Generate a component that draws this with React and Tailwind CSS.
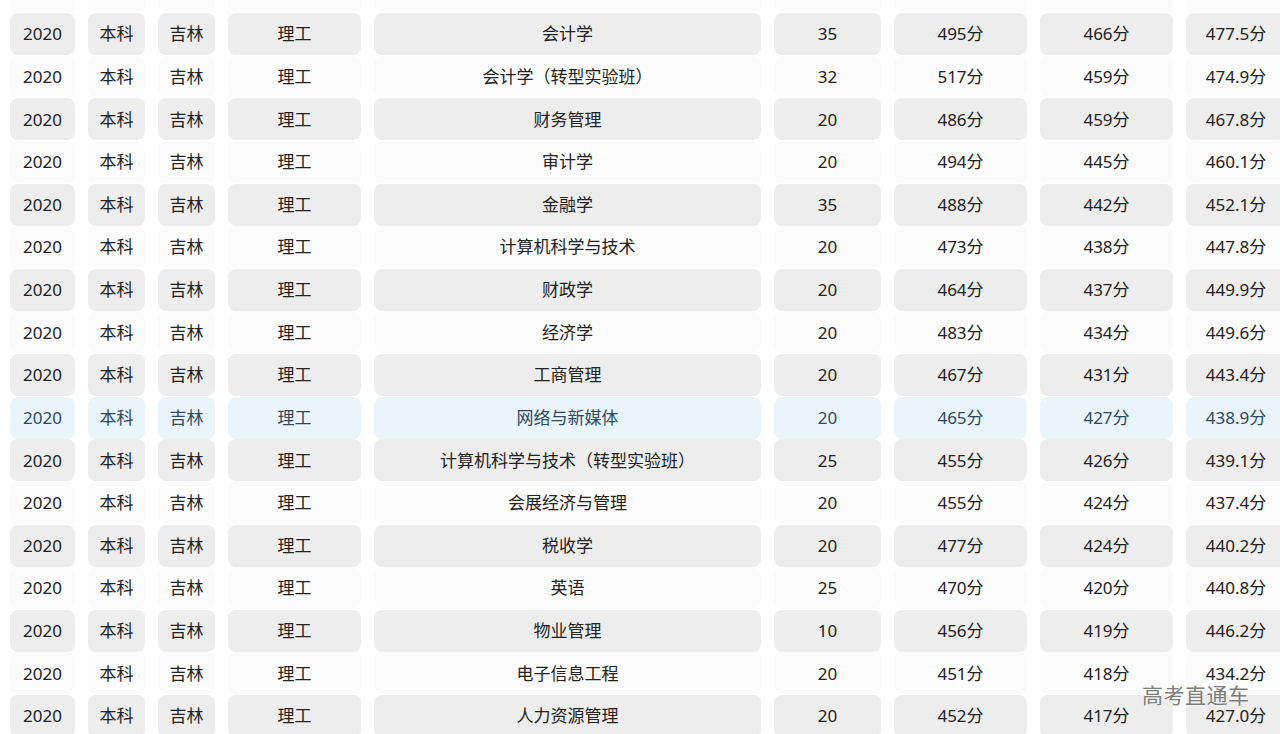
import React from "react";

const rows = [
  ["2020", "本科", "吉林", "理工", "审计学", "20", "499分", "468分", "478.3分"],
  ["2020", "本科", "吉林", "理工", "会计学", "35", "495分", "466分", "477.5分"],
  ["2020", "本科", "吉林", "理工", "会计学（转型实验班）", "32", "517分", "459分", "474.9分"],
  ["2020", "本科", "吉林", "理工", "财务管理", "20", "486分", "459分", "467.8分"],
  ["2020", "本科", "吉林", "理工", "审计学", "20", "494分", "445分", "460.1分"],
  ["2020", "本科", "吉林", "理工", "金融学", "35", "488分", "442分", "452.1分"],
  ["2020", "本科", "吉林", "理工", "计算机科学与技术", "20", "473分", "438分", "447.8分"],
  ["2020", "本科", "吉林", "理工", "财政学", "20", "464分", "437分", "449.9分"],
  ["2020", "本科", "吉林", "理工", "经济学", "20", "483分", "434分", "449.6分"],
  ["2020", "本科", "吉林", "理工", "工商管理", "20", "467分", "431分", "443.4分"],
  ["2020", "本科", "吉林", "理工", "网络与新媒体", "20", "465分", "427分", "438.9分"],
  ["2020", "本科", "吉林", "理工", "计算机科学与技术（转型实验班）", "25", "455分", "426分", "439.1分"],
  ["2020", "本科", "吉林", "理工", "会展经济与管理", "20", "455分", "424分", "437.4分"],
  ["2020", "本科", "吉林", "理工", "税收学", "20", "477分", "424分", "440.2分"],
  ["2020", "本科", "吉林", "理工", "英语", "25", "470分", "420分", "440.8分"],
  ["2020", "本科", "吉林", "理工", "物业管理", "10", "456分", "419分", "446.2分"],
  ["2020", "本科", "吉林", "理工", "电子信息工程", "20", "451分", "418分", "434.2分"],
  ["2020", "本科", "吉林", "理工", "人力资源管理", "20", "452分", "417分", "427.0分"],
];

// column widths, left to right
const widths = ["w-[65px]", "w-[57px]", "w-[57px]", "w-[133px]", "w-[387px]", "w-[107px]", "w-[133px]", "w-[133px]", "w-[100px]"];

const Row = ({ cells, index }) => {
  const hot = index === 10;
  const gray = index % 2 === 1;
  const cellBg = hot ? "bg-[#eaf4fb] text-[#2d4a5f]" : gray ? "bg-[#ededed] text-[#222]" : "bg-[#fbfbfb] text-[#222]";
  return (
    <div className="flex shrink-0 h-[42.625px] gap-[13px] pl-[10px]">
      {cells.map((c, i) => (
        <div
          key={i}
          className={`${widths[i]} shrink-0 h-[42px] flex items-center justify-center rounded-lg whitespace-nowrap ${cellBg}`}
        >
          {c}
        </div>
      ))}
    </div>
  );
};

export default function App() {
  return (
    <div
      className="relative w-[1280px] h-[734px] overflow-hidden bg-white text-[17px]"
      style={{ fontFamily: '"Noto Sans", "Noto Sans CJK SC", sans-serif' }}
    >
      <div className="flex flex-col -mt-[29.625px]">
        {rows.map((r, i) => (
          <Row key={i} cells={r} index={i} />
        ))}
      </div>
      <div className="absolute left-[1142px] top-[680px] text-[21px] text-[#7d7d7d] tracking-[0.5px] [text-shadow:0_0_2px_#fff]">
        高考直通车
      </div>
    </div>
  );
}
